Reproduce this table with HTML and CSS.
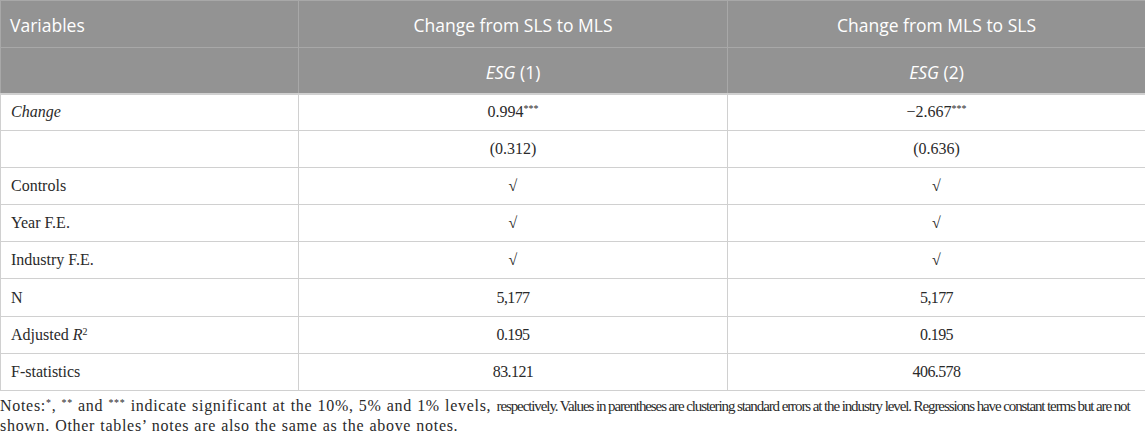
FILE: index.html
```html
<!DOCTYPE html>
<html>
<head>
<meta charset="utf-8">
<link rel="stylesheet" href="styles.css">
</head>
<body>
<table class="tbl">
  <colgroup>
    <col class="c1">
    <col class="c2">
    <col class="c3">
  </colgroup>
  <thead>
    <tr class="hrow">
      <th class="left">Variables</th>
      <th>Change from SLS to MLS</th>
      <th>Change from MLS to SLS</th>
    </tr>
    <tr class="hrow">
      <th class="left"></th>
      <th><i>ESG</i> (1)</th>
      <th><i>ESG</i> (2)</th>
    </tr>
  </thead>
  <tbody>
    <tr><td class="left"><i>Change</i></td><td>0.994<sup>***</sup></td><td>−2.667<sup>***</sup></td></tr>
    <tr><td class="left"></td><td>(0.312)</td><td>(0.636)</td></tr>
    <tr><td class="left">Controls</td><td>√</td><td>√</td></tr>
    <tr><td class="left">Year F.E.</td><td>√</td><td>√</td></tr>
    <tr><td class="left">Industry F.E.</td><td>√</td><td>√</td></tr>
    <tr><td class="left">N</td><td class="cond">5,177</td><td class="cond">5,177</td></tr>
    <tr><td class="left">Adjusted <i>R</i><sup>2</sup></td><td class="cond">0.195</td><td class="cond">0.195</td></tr>
    <tr><td class="left">F-statistics</td><td class="cond">83.121</td><td class="cond">406.578</td></tr>
  </tbody>
</table>
<p class="notes"><span class="wide">Notes:<sup>*</sup>, <sup>**</sup> and <sup>***</sup> indicate significant at the 10%, 5% and 1% levels, </span><span class="narrow">respectively. Values in parentheses are clustering standard errors at the industry level. Regressions have constant terms but are not</span> <span class="wide">shown. Other tables’ notes are also the same as the above notes.</span></p>
</body>
</html>
```
FILE: styles.css
```css
html, body {
  margin: 0;
  padding: 0;
  background: #fff;
}
.tbl {
  width: 1145px;
  border-collapse: collapse;
  table-layout: fixed;
  font-family: "Liberation Serif", serif;
  font-size: 16px;
  color: #2a2a2a;
}
.c1 { width: 298px; }
.c2 { width: 429px; }
.c3 { width: 418px; }
.hrow th {
  background: #939393;
  color: #fff;
  font-family: "Open Sans", sans-serif;
  font-weight: normal;
  font-size: 17.5px;
  height: 46.5px;
  padding: 3px 9px 0 9px;
  border: 1px solid #a8a8a8;
  text-align: center;
  box-sizing: border-box;
}
.hrow th.left { text-align: left; }
.tbl thead tr:first-child th { border-top-color: #a8a8a8; }
.tbl tbody td {
  height: 37.1px;
  padding: 0 10px;
  border: 1px solid #d0d0d0;
  text-align: center;
  box-sizing: border-box;
}
.tbl tbody tr:first-child td { border-top: 2px solid #d0d0d0; }
.tbl tbody td.left { text-align: left; }
.tbl tbody td.cond { letter-spacing: -0.6px; }
sup {
  font-size: 0.62em;
  line-height: 0;
  vertical-align: 0.5em;
}
.notes {
  margin: 0;
  padding: 5px 0 0 0;
  font-family: "Liberation Serif", serif;
  font-size: 16px;
  line-height: 19.5px;
  color: #2a2a2a;
}
.wide {
  letter-spacing: 0.7px;
  word-spacing: 0.5px;
}
.narrow {
  font-size: 15px;
  letter-spacing: -1.1px;
  word-spacing: 0;
}
```
